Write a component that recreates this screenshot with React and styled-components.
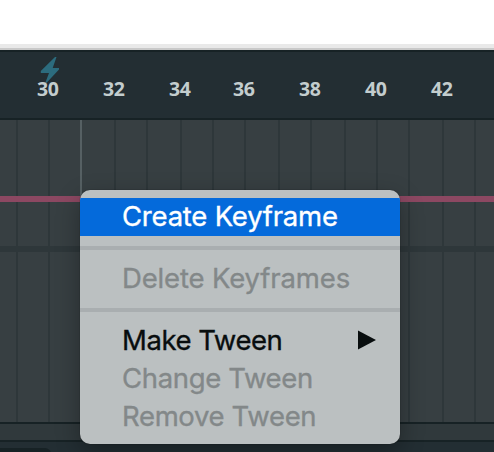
import React from "react";
import styled, { createGlobalStyle } from "styled-components";

const GlobalStyle = createGlobalStyle`
  * { box-sizing: border-box; }
  html, body { margin: 0; padding: 0; overflow: hidden; background: #fff; }
`;

const Screen = styled.main`
  position: relative;
  display: flex;
  flex-direction: column;
  width: 494px;
  height: 452px;
  overflow: hidden;
  background: #232e33;
`;

const TopBlank = styled.div`
  flex: none;
  height: 50px;
  background: #fff;
  border-bottom: 2px solid #c9c9c9;
  box-shadow: inset 0 -4px #e9e9e9;
`;

const Ruler = styled.header`
  position: relative;
  flex: none;
  display: grid;
  grid-template-columns: 81px 66px 65px 65px 66px 65px 86px;
  height: 70px;
  border-top: 2px solid #172225;
  border-bottom: 2px solid #172225;
  background: #232e33;
`;

const Frame = styled.span`
  position: relative;
  padding: 23px 0 0 ${(p) => p.$inset}px;
  font: 700 19.5px/28px "Noto Sans", sans-serif;
  letter-spacing: -0.4px;
  color: #c3cdce;
`;

const Bolt = styled.svg`
  position: absolute;
  left: 40px;
  top: 4px;
  width: 20px;
  height: 30px;
  fill: #2c6c7e;
`;

const Track = styled.section`
  position: relative;
  flex: none;
  display: grid;
  grid-template-columns: 16px 32px 32px 34px 32px 34px 32px 32px 34px 32px 34px 32px 32px 34px 32px 20px;
  height: ${(p) => p.$height}px;
  background: #373f42;
`;

const Cell = styled.div`
  border-left: ${(p) => (p.$first ? 0 : 2)}px solid ${(p) => (p.$playhead ? "#566063" : "#2e373a")};
`;

const TweenBar = styled.div`
  position: absolute;
  left: 0;
  right: 0;
  top: 76px;
  height: 6px;
  background: #8c4862;
`;

const Divider = styled.div`
  flex: none;
  height: 6px;
  background: #2e373a;
`;

const Scroller = styled.div`
  flex: none;
  height: 20px;
  border-top: 2px solid #172225;
  border-bottom: 2px solid #172225;
  background: #30393c;
`;

const Footer = styled.footer`
  flex: 1;
  padding-top: 6px;
  background: #232e33;
`;

const FooterTab = styled.div`
  width: 51px;
  height: 20px;
  border-top-right-radius: 6px;
  background: #172225;
`;

const Menu = styled.nav`
  position: absolute;
  left: 80px;
  top: 190px;
  width: 320px;
  height: 254px;
  padding: 8px 0;
  border-radius: 10px;
  background: #bbc0c1;
  box-shadow: 0 0 1px rgba(0, 0, 0, 0.7), 0 8px 24px rgba(0, 0, 0, 0.32);
  overflow: hidden;
`;

const Item = styled.div`
  display: flex;
  align-items: center;
  justify-content: space-between;
  height: 38px;
  padding: 0 24px 2px 42px;
  font: 400 27.5px/36px Inter, sans-serif;
  letter-spacing: ${(p) => p.$track}px;
  white-space: nowrap;
  color: ${(p) => (p.$active ? "#fff" : p.$disabled ? "#838889" : "#080d0e")};
  -webkit-text-stroke: 0.35px currentColor;
  background: ${(p) => (p.$active ? "#046adb" : "transparent")};
`;

const Separator = styled.div`
  height: 4px;
  margin: 10px 0;
  background: #a9aeb0;
`;

const Arrow = styled.svg`
  width: 18px;
  height: 20px;
  fill: #080d0e;
`;

const frames = [
  [30, 37], [32, 22], [34, 22], [36, 21], [38, 22], [40, 22], [42, 23],
];

const Cells = () =>
  Array.from({ length: 16 }, (_, i) => <Cell key={i} $first={i === 0} $playhead={i === 3} />);

export default function App() {
  return (
    <Screen>
      <GlobalStyle />
      <TopBlank />
      <Ruler>
        <Bolt viewBox="0 0 20 30">
          <path d="M15 1 L0.8 15 V17 H9 L4.5 29 L19 13.5 V12 H12.7 L16.5 1 Z" />
        </Bolt>
        {frames.map(([n, inset]) => (
          <Frame key={n} $inset={inset}>{n}</Frame>
        ))}
      </Ruler>
      <Track $height={126}>
        <Cells />
        <TweenBar />
      </Track>
      <Divider />
      <Track $height={170}>
        <Cells />
      </Track>
      <Scroller />
      <Footer>
        <FooterTab />
      </Footer>
      <Menu>
        <Item $active $track={-0.22}>Create Keyframe</Item>
        <Separator />
        <Item $disabled $track={-0.15}>Delete Keyframes</Item>
        <Separator />
        <Item $track={-0.45}>
          Make Tween
          <Arrow viewBox="0 0 18 20">
            <path d="M0 0.5 L18 10 L0 19.5 Z" />
          </Arrow>
        </Item>
        <Item $disabled $track={-0.35}>Change Tween</Item>
        <Item $disabled $track={-0.35}>Remove Tween</Item>
      </Menu>
    </Screen>
  );
}
